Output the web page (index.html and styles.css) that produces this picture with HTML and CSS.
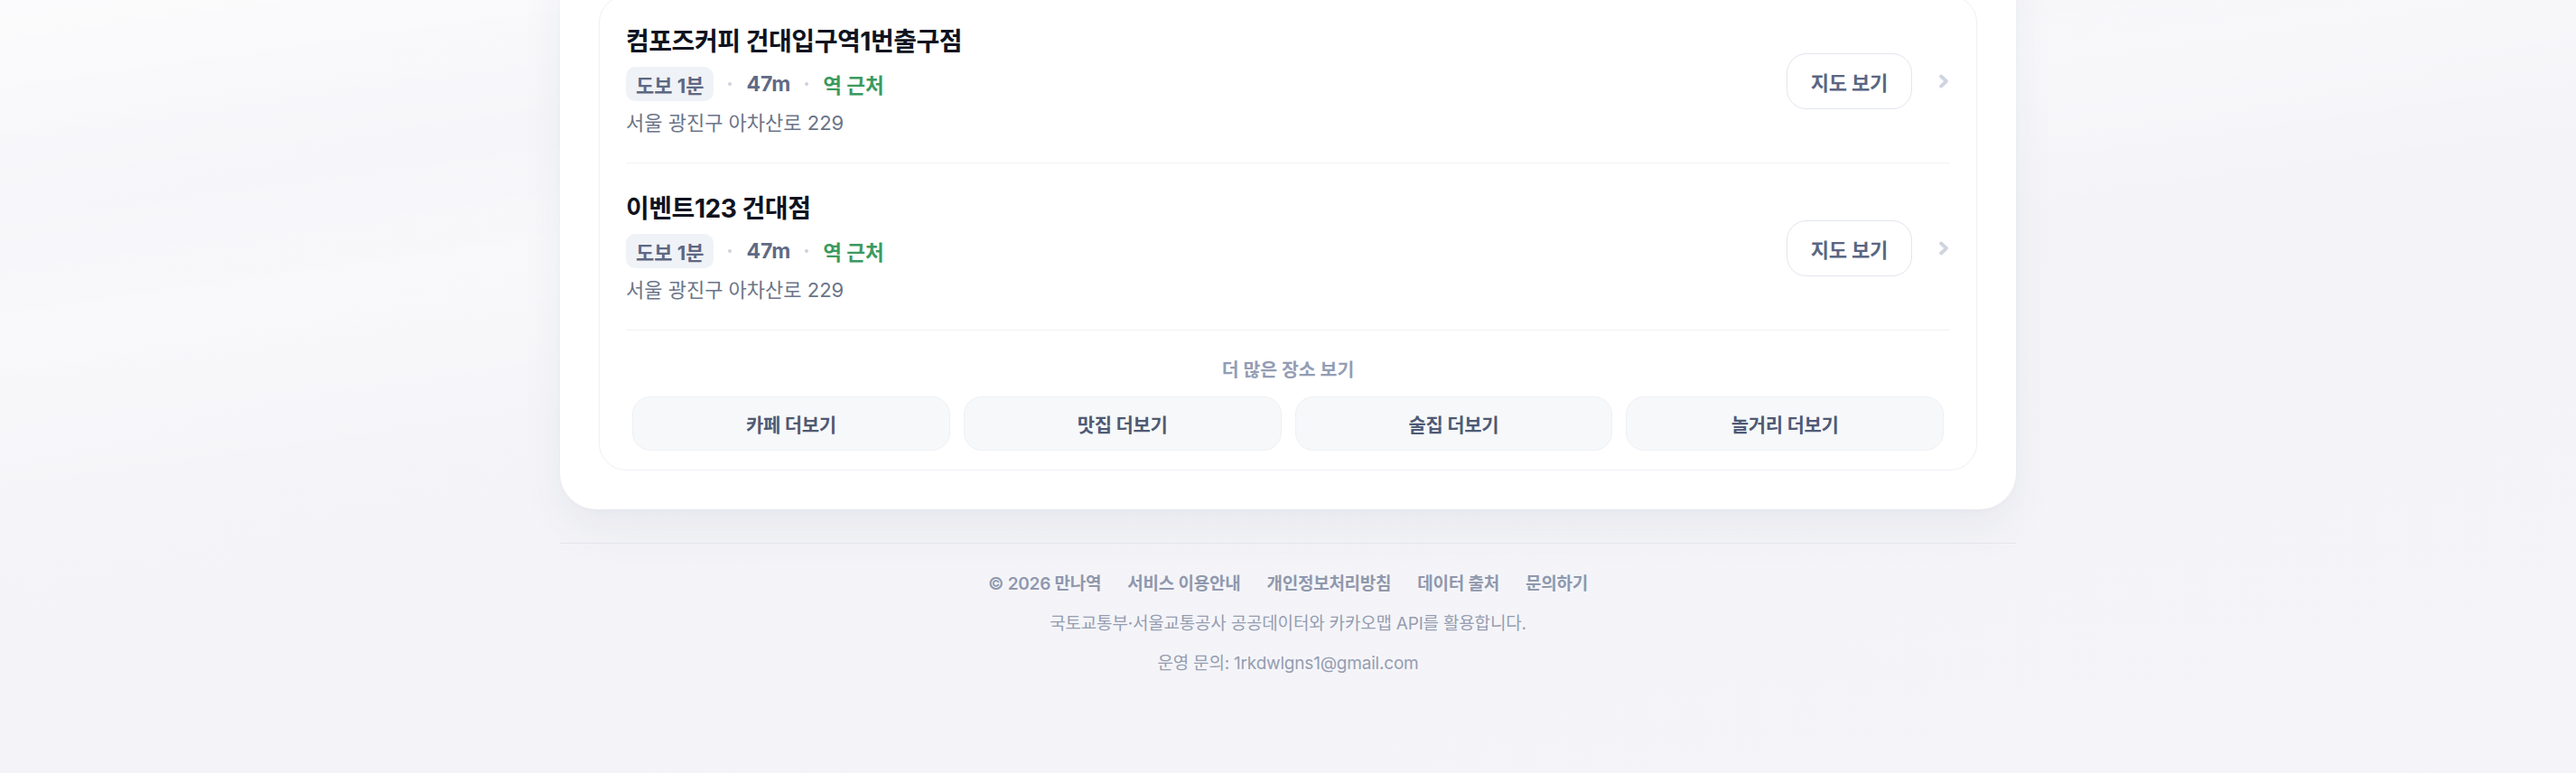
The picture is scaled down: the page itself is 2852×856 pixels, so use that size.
FILE: index.html
```html
<!DOCTYPE html>
<html lang="ko">
<head>
<meta charset="utf-8">
<title>만나역 - 주변 장소</title>
<link rel="stylesheet" href="styles.css">
</head>
<body>
<main class="page">
  <section class="panel">
    <div class="list-card">
      <ul class="places">
        <li class="place">
          <div class="place-info">
            <h3 class="place-name">컴포즈커피 건대입구역1번출구점</h3>
            <div class="place-meta">
              <span class="walk">도보 1분</span>
              <span class="dot"></span>
              <span class="dist">47m</span>
              <span class="dot"></span>
              <span class="near">역 근처</span>
            </div>
            <p class="place-addr">서울 광진구 아차산로 229</p>
          </div>
          <button class="map-btn" type="button">지도 보기</button>
          <svg class="chev" width="14" height="18" viewBox="0 0 14 18" aria-hidden="true"><path d="M4 3.5 L10 9 L4 14.5" fill="none" stroke="#cfd5e0" stroke-width="3.8" stroke-linecap="round" stroke-linejoin="round"/></svg>
        </li>
        <li class="place">
          <div class="place-info">
            <h3 class="place-name">이벤트123 건대점</h3>
            <div class="place-meta">
              <span class="walk">도보 1분</span>
              <span class="dot"></span>
              <span class="dist">47m</span>
              <span class="dot"></span>
              <span class="near">역 근처</span>
            </div>
            <p class="place-addr">서울 광진구 아차산로 229</p>
          </div>
          <button class="map-btn" type="button">지도 보기</button>
          <svg class="chev" width="14" height="18" viewBox="0 0 14 18" aria-hidden="true"><path d="M4 3.5 L10 9 L4 14.5" fill="none" stroke="#cfd5e0" stroke-width="3.8" stroke-linecap="round" stroke-linejoin="round"/></svg>
        </li>
      </ul>
      <div class="more">
        <p class="more-title">더 많은 장소 보기</p>
        <div class="more-grid">
          <button class="more-btn" type="button">카페 더보기</button>
          <button class="more-btn" type="button">맛집 더보기</button>
          <button class="more-btn" type="button">술집 더보기</button>
          <button class="more-btn" type="button">놀거리 더보기</button>
        </div>
      </div>
    </div>
  </section>

  <footer class="site-footer">
    <nav class="footer-links">
      <span class="copy">© 2026 만나역</span>
      <a href="#">서비스 이용안내</a>
      <a href="#">개인정보처리방침</a>
      <a href="#">데이터 출처</a>
      <a href="#">문의하기</a>
    </nav>
    <p class="footer-note">국토교통부·서울교통공사 공공데이터와 카카오맵 API를 활용합니다.</p>
    <p class="footer-note">운영 문의: 1rkdwlgns1@gmail.com</p>
  </footer>
</main>
</body>
</html>
```

FILE: styles.css
```css
* {
  box-sizing: border-box;
}

html,
body {
  margin: 0;
  min-height: 100%;
}

body {
  font-family: Inter, "Noto Sans CJK KR", sans-serif;
  color: #0f1320;
  background-color: #f5f5f9;
  background-image:
    linear-gradient(172deg, rgba(255, 255, 255, 0.55) 0%, rgba(255, 255, 255, 0) 18%, rgba(255, 255, 255, 0.35) 30%, rgba(255, 255, 255, 0) 45%),
    linear-gradient(165deg, #f7f7fa 0%, #f4f4f8 50%, #f5f5f9 100%);
  min-height: 856px;
}

.page {
  width: 1612px;
  margin: -48px auto 0;
  padding-bottom: 80px;
}

/* outer white panel */
.panel {
  background: #ffffff;
  border-radius: 40px;
  padding: 43px;
  box-shadow: 0 22px 50px rgba(40, 48, 90, 0.06), 0 2px 6px rgba(40, 48, 90, 0.02);
}

/* bordered list card inside the panel */
.list-card {
  border: 1px solid #edf0f4;
  border-radius: 30px;
  padding: 0 29px 21px;
}

.places {
  list-style: none;
  margin: 0;
  padding: 0;
}

.place {
  display: flex;
  align-items: center;
  gap: 30px;
  padding: 32px 0 28px;
  border-bottom: 1px solid #f0f2f6;
}

.place-info {
  flex: 1;
  min-width: 0;
}

.place-name {
  margin: 0;
  font-size: 28px;
  line-height: 36px;
  font-weight: 700;
  letter-spacing: -0.45px;
  color: #0f1320;
}

.place-meta {
  display: flex;
  align-items: center;
  gap: 16px;
  margin-top: 10px;
  font-size: 22px;
  font-weight: 700;
}

.walk {
  display: inline-flex;
  align-items: center;
  height: 38px;
  padding: 0 11px;
  border-radius: 10px;
  background: #eff2f7;
  color: #5d6882;
}

.dot {
  width: 4px;
  height: 4px;
  border-radius: 50%;
  background: #cdd2dd;
}

.dist {
  color: #5f6a85;
  font-size: 23px;
}

.near {
  color: #3b9a5e;
  font-size: 22.5px;
}

.place-addr {
  margin: 8px 0 0;
  font-size: 22px;
  line-height: 32px;
  color: #6b7488;
}

.map-btn {
  font-family: inherit;
  height: 62px;
  padding: 0 26px;
  border: 1px solid #e2e5ee;
  border-radius: 22px;
  background: #ffffff;
  color: #5a6682;
  font-size: 22px;
  font-weight: 700;
  letter-spacing: -0.2px;
}

.chev {
  display: block;
  margin-left: -2px;
}

/* "more places" shortcuts */
.more {
  padding: 30px 7px 0;
}

.more-title {
  margin: 0 0 15px;
  text-align: center;
  font-size: 20.5px;
  line-height: 28px;
  font-weight: 700;
  color: #949db3;
}

.more-grid {
  display: grid;
  grid-template-columns: repeat(4, 1fr);
  gap: 15px;
}

.more-btn {
  font-family: inherit;
  height: 60px;
  border: 1px solid #eef0f4;
  border-radius: 20px;
  background: #f7f8fa;
  color: #4f5a74;
  font-size: 21px;
  font-weight: 700;
  letter-spacing: -0.3px;
}

/* footer */
.site-footer {
  margin-top: 37px;
  border-top: 1px solid #e3e5ec;
  padding-top: 31px;
  text-align: center;
}

.footer-links {
  display: flex;
  justify-content: center;
  gap: 29px;
  font-size: 19px;
  line-height: 28px;
  font-weight: 600;
  letter-spacing: -0.25px;
  color: #8f98ad;
}

.footer-links a {
  color: inherit;
  text-decoration: none;
}

.footer-note {
  margin: 16px 0 0;
  font-size: 19px;
  line-height: 28px;
  letter-spacing: -0.2px;
  color: #959db1;
}
```
